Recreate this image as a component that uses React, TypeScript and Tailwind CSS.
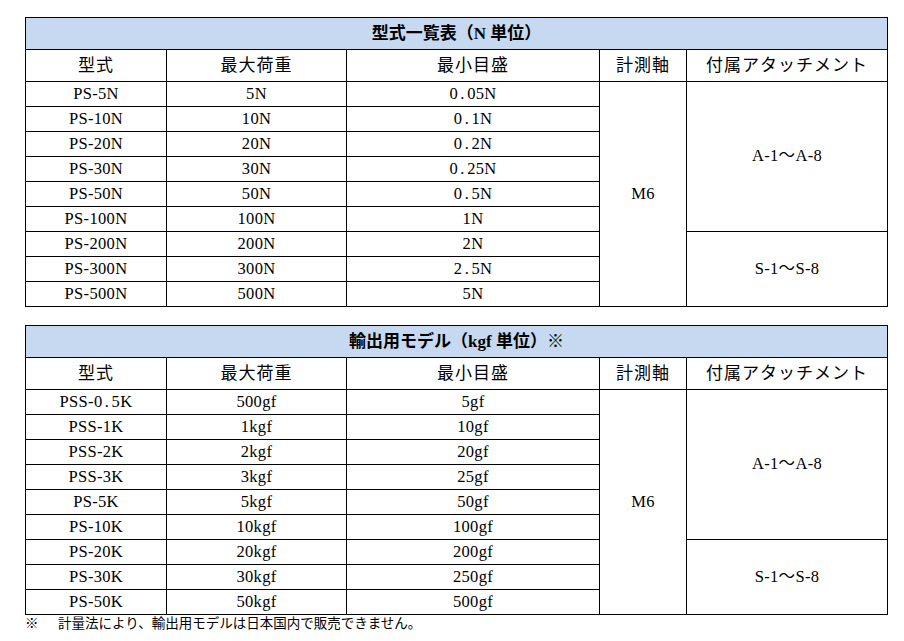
import React from "react";

type Row = { model: string; max: string; min: string };

const nRows: Row[] = [
  { model: "PS-5N", max: "5N", min: "0.05N" },
  { model: "PS-10N", max: "10N", min: "0.1N" },
  { model: "PS-20N", max: "20N", min: "0.2N" },
  { model: "PS-30N", max: "30N", min: "0.25N" },
  { model: "PS-50N", max: "50N", min: "0.5N" },
  { model: "PS-100N", max: "100N", min: "1N" },
  { model: "PS-200N", max: "200N", min: "2N" },
  { model: "PS-300N", max: "300N", min: "2.5N" },
  { model: "PS-500N", max: "500N", min: "5N" },
];

const kRows: Row[] = [
  { model: "PSS-0.5K", max: "500gf", min: "5gf" },
  { model: "PSS-1K", max: "1kgf", min: "10gf" },
  { model: "PSS-2K", max: "2kgf", min: "20gf" },
  { model: "PSS-3K", max: "3kgf", min: "25gf" },
  { model: "PS-5K", max: "5kgf", min: "50gf" },
  { model: "PS-10K", max: "10kgf", min: "100gf" },
  { model: "PS-20K", max: "20kgf", min: "200gf" },
  { model: "PS-30K", max: "30kgf", min: "250gf" },
  { model: "PS-50K", max: "50kgf", min: "500gf" },
];

// Mincho-style wide period
function Num({ text }: { text: string }) {
  const parts = text.split(".");
  if (parts.length === 1) return <>{text}</>;
  return (
    <>
      {parts[0]}
      <span className="inline-block w-[0.55em]">.</span>
      {parts[1]}
    </>
  );
}

const cell = "border border-black text-center p-0 align-middle";

function SpecTable({ title, rows }: { title: React.ReactNode; rows: Row[] }) {
  return (
    <table className="border-collapse table-fixed w-[862px]">
      <colgroup>
        <col className="w-[141px]" />
        <col className="w-[180px]" />
        <col className="w-[253px]" />
        <col className="w-[87px]" />
        <col className="w-[201px]" />
      </colgroup>
      <tbody>
        <tr className="h-[32px]">
          <td colSpan={5} className={`${cell} bg-[#c6d9f1] font-bold text-[17px]`}>
            {title}
          </td>
        </tr>
        <tr className="h-[32px] text-[17px] tracking-[0.06em]">
          <td className={cell}>型式</td>
          <td className={cell}>最大荷重</td>
          <td className={cell}>最小目盛</td>
          <td className={cell}>計測軸</td>
          <td className={cell}>付属アタッチメント</td>
        </tr>
        {rows.map((r, i) => (
          <tr key={r.model} className="h-[25px] text-[16.5px] tracking-[0.02em]">
            <td className={cell}>
              <Num text={r.model} />
            </td>
            <td className={cell}>{r.max}</td>
            <td className={cell}>
              <Num text={r.min} />
            </td>
            {i === 0 && (
              <td rowSpan={9} className={cell}>
                M6
              </td>
            )}
            {i === 0 && (
              <td rowSpan={6} className={cell}>
                A-1～A-8
              </td>
            )}
            {i === 6 && (
              <td rowSpan={3} className={cell}>
                S-1～S-8
              </td>
            )}
          </tr>
        ))}
      </tbody>
    </table>
  );
}

export default function App() {
  return (
    <div
      className="w-[904px] h-[641px] bg-white text-black pl-[25px] pt-[17px] leading-none"
      style={{ fontFamily: '"Liberation Serif", "Noto Sans CJK JP", serif' }}
    >
      <SpecTable
        title={
          <>
            型式一覧表（N 単位）
          </>
        }
        rows={nRows}
      />
      <div className="h-[18px]" />
      <SpecTable
        title={
          <>
            輸出用モデル（kgf 単位）※
          </>
        }
        rows={kRows}
      />
      <div className="text-[13.5px] mt-[2px] flex">
        <span className="w-[33px]">※</span>
        <span>計量法により、輸出用モデルは日本国内で販売できません。</span>
      </div>
    </div>
  );
}
